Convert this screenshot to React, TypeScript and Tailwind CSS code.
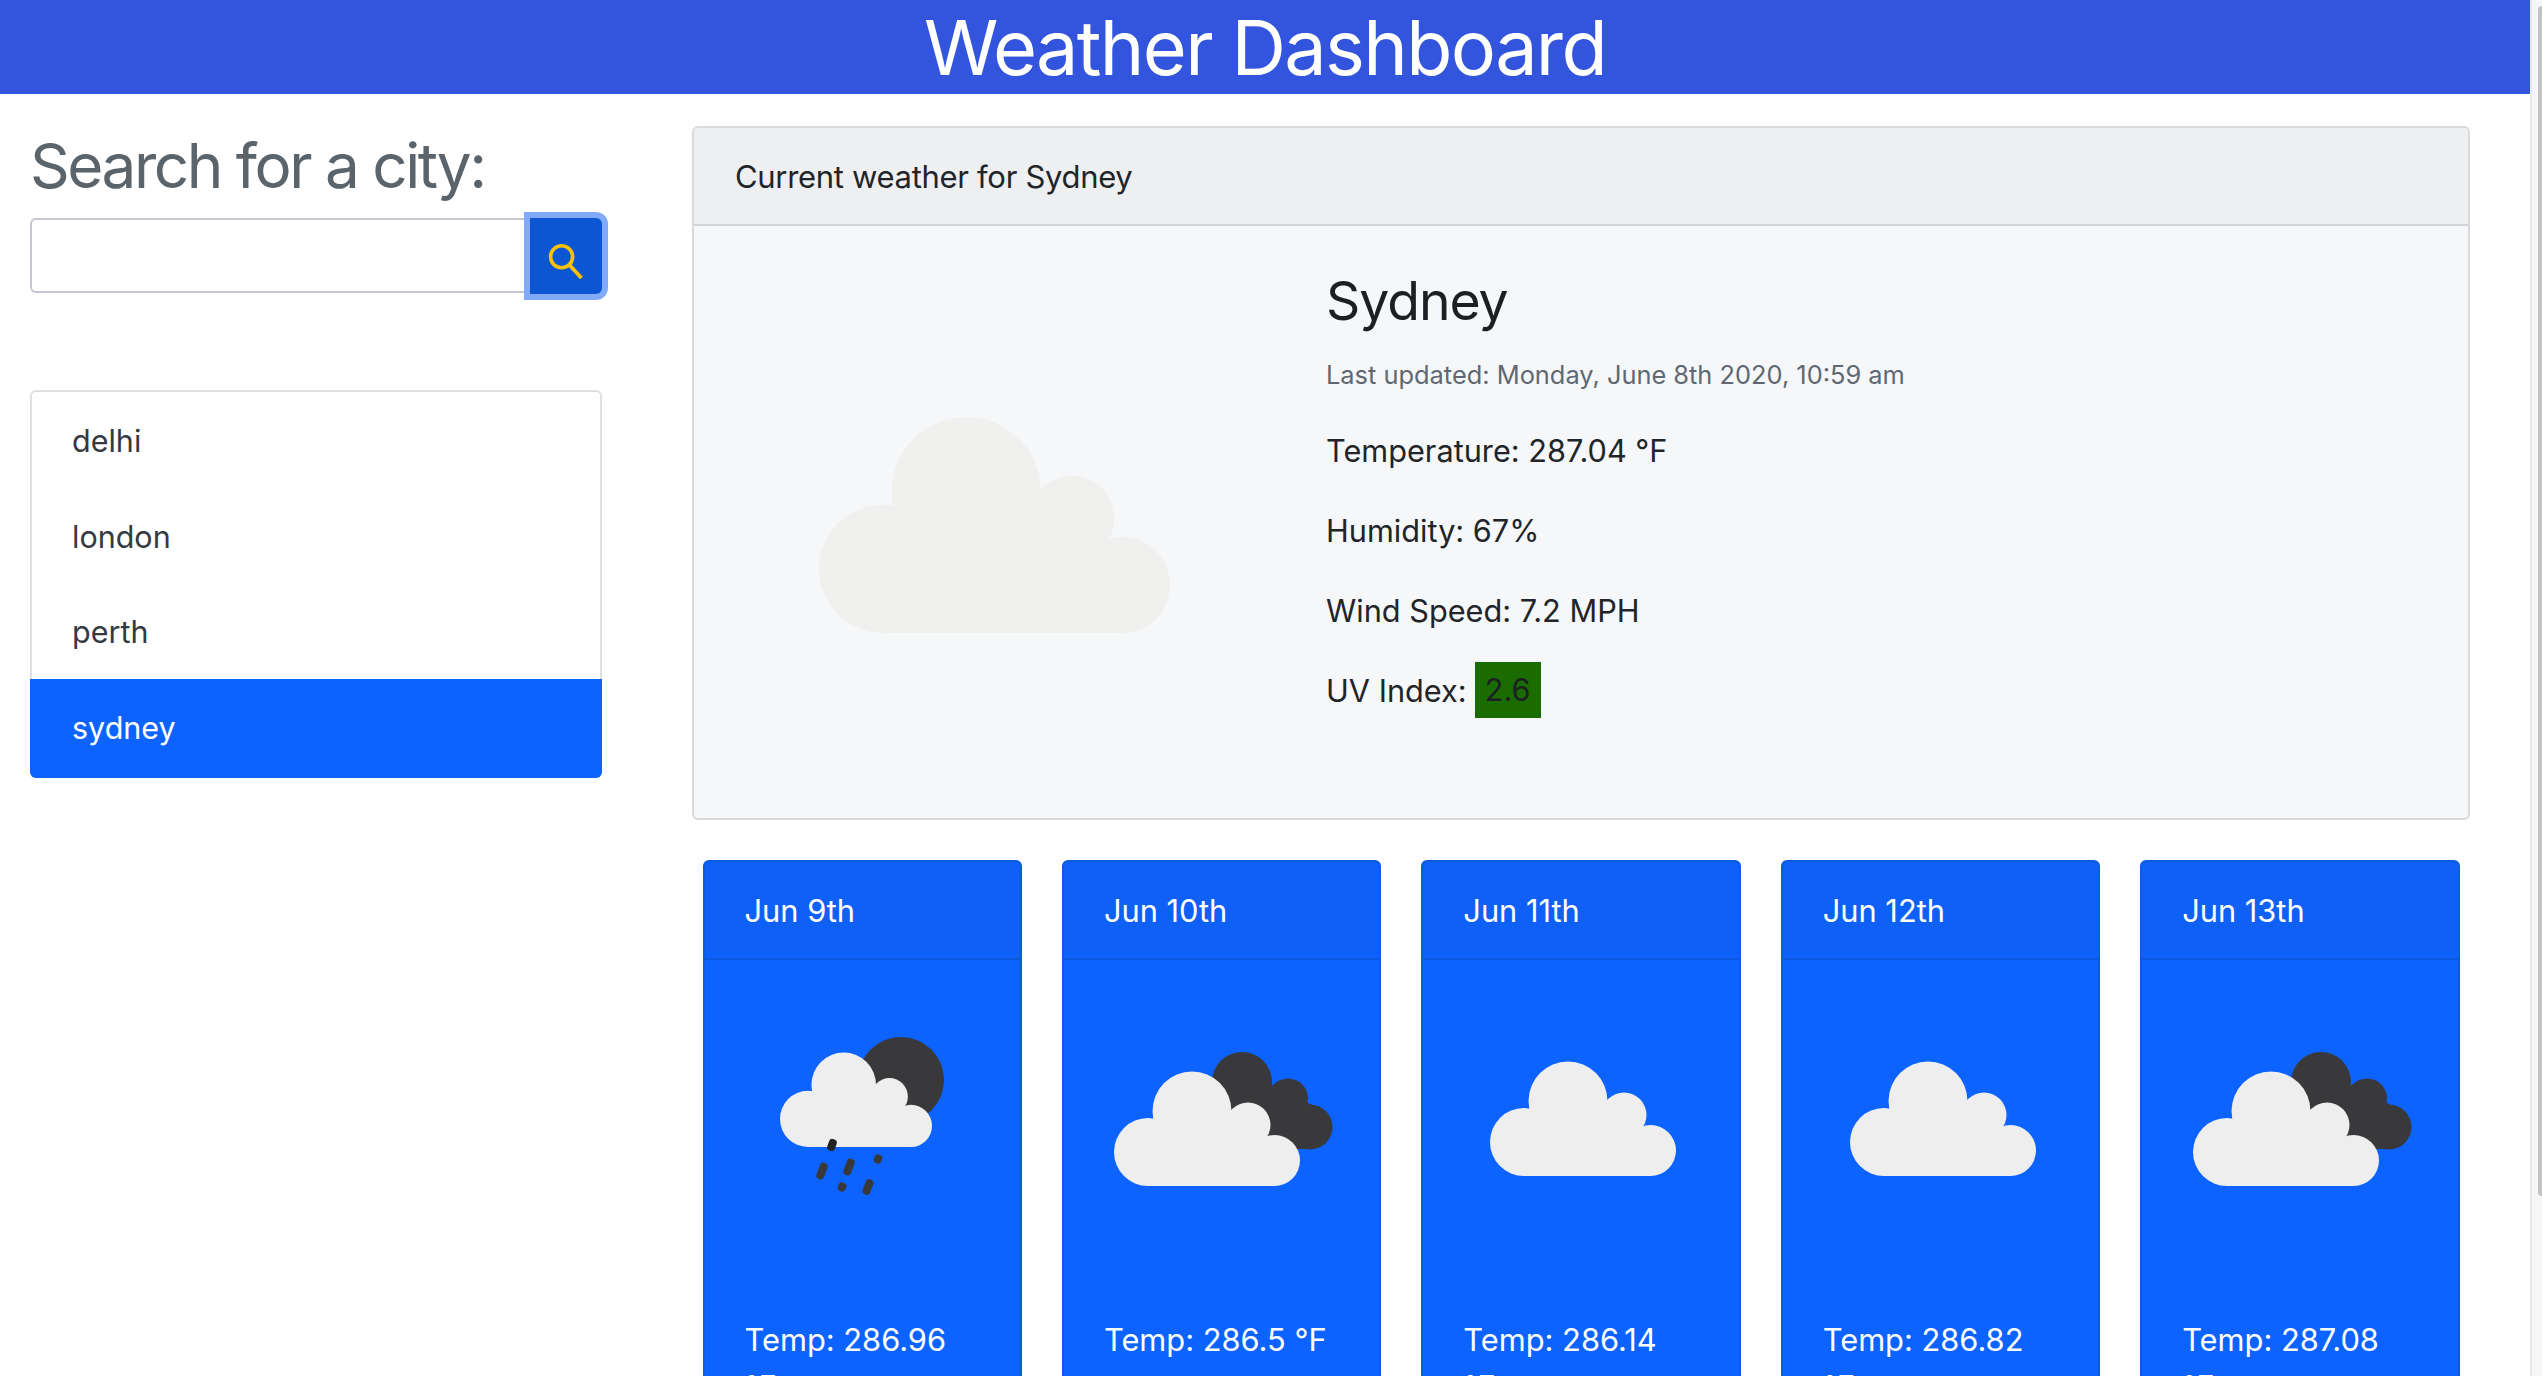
import React from "react";

const LIGHT = "#eeeeee";
const DARK = "#39393b";

function CloudShape({ fill }: { fill: string }) {
  return (
    <g fill={fill}>
      <circle cx="34" cy="81" r="34" />
      <circle cx="78" cy="40" r="39.5" />
      <circle cx="134" cy="54" r="22.5" />
      <circle cx="160.5" cy="89.5" r="25.5" />
      <rect x="34" y="72" width="126" height="43" />
      <rect x="60" y="40" width="74" height="40" />
    </g>
  );
}

function DarkCloud() {
  return (
    <g fill={DARK}>
      <circle cx="128" cy="11" r="30" />
      <circle cx="174" cy="27.5" r="20" />
      <circle cx="196" cy="56" r="22.5" />
      <polygon points="100,20 150,10 190,30 210,40 196,78 120,78" />
    </g>
  );
}

function CloudIcon({ x, y, dark }: { x: number; y: number; dark?: boolean }) {
  return (
    <g transform={`translate(${x} ${y})`}>
      {dark && <DarkCloud />}
      <CloudShape fill={LIGHT} />
    </g>
  );
}

function RainIcon() {
  const drops: [number, number, number, number][] = [
    [119, 211, 8, 17],
    [146, 207, 8, 17],
    [165, 227, 8, 16],
    [175, 199, 8, 9],
    [139, 227, 8, 9],
    [129, 185, 8, 12],
  ];
  return (
    <g>
      <circle cx="198" cy="120" r="43" fill={DARK} />
      <g transform="translate(77 92) scale(0.817 0.826)">
        <CloudShape fill={LIGHT} />
      </g>
      {drops.map(([cx, cy, w, h], i) => (
        <rect
          key={i}
          x={cx - w / 2}
          y={cy - h / 2}
          width={w}
          height={h}
          rx="3.5"
          fill={i === 5 ? "#222224" : DARK}
          transform={`rotate(20 ${cx} ${cy})`}
        />
      ))}
    </g>
  );
}

type Day = { date: string; temp: string; icon: React.ReactNode };

const days: Day[] = [
  { date: "Jun 9th", temp: "Temp: 286.96 °F", icon: <RainIcon /> },
  { date: "Jun 10th", temp: "Temp: 286.5 °F", icon: <CloudIcon x={52} y={111} dark /> },
  { date: "Jun 11th", temp: "Temp: 286.14 °F", icon: <CloudIcon x={69} y={101} /> },
  { date: "Jun 12th", temp: "Temp: 286.82 °F", icon: <CloudIcon x={69} y={101} /> },
  { date: "Jun 13th", temp: "Temp: 287.08 °F", icon: <CloudIcon x={53} y={111} dark /> },
];

const cities = ["delhi", "london", "perth", "sydney"];

export default function App() {
  return (
    <div className="flex h-[1376px] w-full overflow-hidden bg-white font-['Inter','Noto_Sans',sans-serif] text-[#212529]">
      <div className="min-w-0 flex-1">
        <header className="flex h-[94px] items-center justify-center bg-[#3355dd] pt-[2px] text-[75.5px] leading-[94px] tracking-[-0.022em] text-white">
          Weather Dashboard
        </header>
        <div className="flex">
          <aside className="w-[692px] shrink-0 pl-[30px] pt-[33px]">
            <h2 className="h-[78px] text-[62px] leading-[78px] tracking-[-0.04em] text-[#5b636b]">
              Search for a city:
            </h2>
            <div className="mt-[13px] flex h-[76px] w-[572px]">
              <input
                className="h-[75px] w-[500px] rounded-l-[6px] border-2 border-r-0 border-[#c3c8d0] bg-white outline-none"
                aria-label="city"
              />
              <button className="relative flex h-[76px] w-[72px] items-center justify-center rounded-r-[6px] bg-[#0b56d2] pt-[9px] shadow-[0_0_0_6px_#82aafa]">
                <svg width="36" height="36" viewBox="0 0 36 36" fill="none" stroke="#ffc107">
                  <circle cx="13.6" cy="13.7" r="11" strokeWidth="3.6" />
                  <path d="M21 21.5 L33.5 35" strokeWidth="3.8" />
                </svg>
              </button>
            </div>
            <ul className="mt-[96px] w-[572px] rounded-[6px] border-2 border-[#dfe0e2]">
              {cities.map((c) => (
                <li
                  key={c}
                  className={
                    c === "sydney"
                      ? "-mx-[2px] -mb-[2px] flex h-[99px] items-center rounded-b-[6px] bg-[#0d63ff] pl-[42px] text-[30.5px] text-white"
                      : "flex h-[95.6px] items-center pl-[40px] pt-[2px] text-[30.5px] text-[#343a40]"
                  }
                >
                  {c}
                </li>
              ))}
            </ul>
          </aside>
          <main className="w-[1778px] shrink-0 pt-[32px]">
            <section className="overflow-hidden rounded-[6px] border-2 border-[#d9dadc] bg-[#f6f7f9]">
              <div className="flex h-[98px] items-center border-b-2 border-[#d2d3d6] bg-[#eeeff1] pl-[41px] pt-[2px] text-[31px] tracking-[-0.01em]">
                Current weather for Sydney
              </div>
              <div className="flex h-[592px]">
                <div className="flex w-[606px] shrink-0 items-center justify-center pr-[6px] pt-[5px]">
                  <svg className="h-[217px] w-[351px] overflow-visible" viewBox="0 0 186 115" preserveAspectRatio="none">
                    <CloudShape fill="#f0f0ef" />
                  </svg>
                </div>
                <div className="pl-[26px] pt-[45px]">
                  <h3 className="h-[60px] text-[53.5px] leading-[60px] tracking-[-0.02em] text-[#1c1f23]">Sydney</h3>
                  <p className="mt-[26px] h-[36px] text-[25.4px] leading-[36px] text-[#5f6872]">
                    Last updated: Monday, June 8th 2020, 10:59 am
                  </p>
                  <div className="mt-[38px] flex flex-col gap-[40px] text-[30.7px] leading-[40px]">
                    <p className="h-[40px]">Temperature: 287.04 °F</p>
                    <p className="h-[40px]">Humidity: 67%</p>
                    <p className="h-[40px]">Wind Speed: 7.2 MPH</p>
                    <p className="flex h-[40px] items-center">
                      UV Index:
                      <span className="ml-[8px] -mt-[2px] flex h-[56px] w-[66px] shrink-0 items-center justify-center bg-[#1a6b00] text-[#1c1f23]">
                        2.6
                      </span>
                    </p>
                  </div>
                </div>
              </div>
            </section>
            <div className="mt-[40px] flex gap-[40px] px-[10.5px]">
              {days.map((d) => (
                <article
                  key={d.date}
                  className="h-[600px] min-w-0 flex-1 overflow-hidden rounded-t-[6px] border-2 border-[#0c5bdf] bg-[#0d63ff] text-white"
                >
                  <div className="flex h-[98px] items-center border-b-2 border-[#0c58dc] bg-[#0e60f7] pl-[40px] pt-[2px] text-[30.8px]">
                    {d.date}
                  </div>
                  <svg className="block h-[320px] w-[316px]" viewBox="2 0 316 320">
                    {d.icon}
                  </svg>
                  <p className="mt-[36px] pl-[40px] pr-[42px] text-[30.8px] leading-[47px]">{d.temp}</p>
                </article>
              ))}
            </div>
          </main>
        </div>
      </div>
      <div className="h-full w-[12px] shrink-0 border-l-2 border-[#e8e8e8] bg-[#f6f6f6] pl-[6px] pt-[6px]">
        <div className="h-[1190px] w-[4px] rounded-l-[4px] bg-[#c2c2c2]" />
      </div>
    </div>
  );
}
